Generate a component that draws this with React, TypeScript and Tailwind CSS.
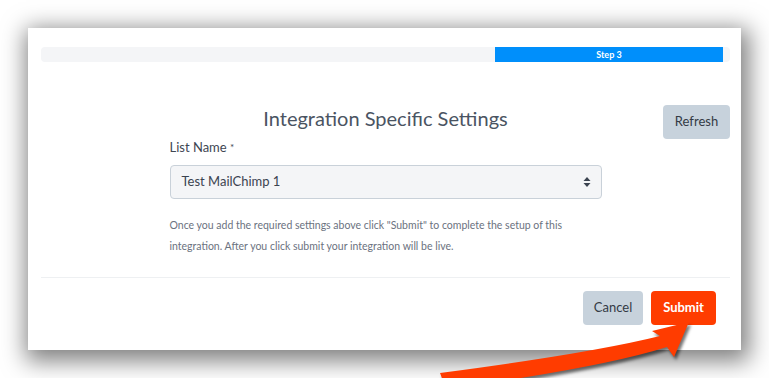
import React from 'react';

const font = { fontFamily: 'Lato, "Open Sans", Arial, sans-serif' };

function SelectArrows() {
  return (
    <svg width="8" height="12" viewBox="0 0 8 12" aria-hidden>
      <path d="M4 1 L7.5 5 H0.5 Z" fill="#3b4350" />
      <path d="M4 11 L7.5 7 H0.5 Z" fill="#3b4350" />
    </svg>
  );
}

function Arrow() {
  return (
    <svg
      className="pointer-events-none absolute left-0 top-0 drop-shadow-[2px_3px_1.5px_rgba(0,0,0,0.55)]"
      width="769"
      height="378"
      viewBox="0 0 769 378"
      aria-hidden
    >
      <path
        d="M440 373 Q592 353 660 336 L652 331 L689 322 L674 357 L667 347 Q600 368 446 389 Z"
        fill="#ff3c00"
      />
    </svg>
  );
}

export default function App() {
  return (
    <div className="relative h-[378px] w-[769px] overflow-hidden bg-white" style={font}>
      <div className="pl-[28px] pt-[28px]">
        <div className="flex h-[322px] w-[713px] flex-col bg-white pl-[13px] pr-[11px] pt-[19px] shadow-[3px_6px_22px_5px_rgba(0,0,0,0.5)]">
          <div className="flex h-[15px] w-full overflow-hidden rounded-[4px] bg-[#f4f5f7]">
            <div className="ml-[454px] flex w-[228px] items-center justify-center bg-[#008ffb] text-[9px] font-bold text-white">
              Step 3
            </div>
          </div>

          <div className="mt-[42px] grid grid-cols-[1fr_432px_1fr]">
            <div />
            <div className="flex flex-col">
              <h2 className="text-center text-[20px] leading-[28px] text-[#4a5462]">Integration Specific Settings</h2>
              <label className="mt-[5px] text-[13px] leading-[20px] text-[#3e4652]">
                List Name <span className="align-top text-[10px]">*</span>
              </label>
              <div className="mt-[8px] flex h-[34px] items-center justify-between rounded-[4px] border border-[#c9d1d9] bg-[#f4f5f7] pl-[11px] pr-[10px] text-[13px] text-[#3b4350]">
                <span>Test MailChimp 1</span>
                <SelectArrows />
              </div>
              <p className="mt-[16px] max-w-[400px] text-[10.5px] leading-[21px] text-[#6b7280]">
                Once you add the required settings above click "Submit" to complete the setup of this integration. After you click submit your integration will be live.
              </p>
            </div>
            <div className="flex justify-end">
              <button className="mt-[1px] h-[34px] w-[67px] rounded-[4px] bg-[#c7d2dc] text-[13px] text-[#333a44]">
                Refresh
              </button>
            </div>
          </div>

          <div className="mt-[20px] h-px w-full bg-[#eef0f2]" />

          <div className="mr-[14px] mt-[13px] flex justify-end gap-[8px]">
            <button className="h-[34px] w-[60px] rounded-[4px] bg-[#c7d2dc] text-[13px] text-[#333a44]">Cancel</button>
            <button className="h-[34px] w-[65px] rounded-[4px] bg-[#ff3c00] text-[13px] font-bold text-white">Submit</button>
          </div>
        </div>
      </div>
      <Arrow />
    </div>
  );
}
